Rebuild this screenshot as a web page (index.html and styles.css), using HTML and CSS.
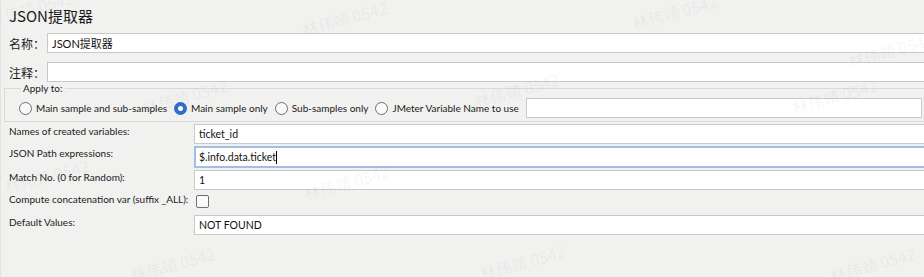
FILE: index.html
```html
<!DOCTYPE html>
<html lang="zh-CN">
<head>
    <meta charset="UTF-8">
    <meta name="viewport" content="width=device-width, initial-scale=1.0">
    <title>JSON提取器</title>
    <link rel="stylesheet" href="styles.css">
</head>
<body>
    <div class="panel">
        <h1 class="title">JSON提取器</h1>

        <div class="info-row">
            <label class="info-label" for="name">名称：</label>
            <input type="text" id="name" class="textbox" value="JSON提取器">
        </div>
        <div class="info-row">
            <label class="info-label" for="comment">注释：</label>
            <input type="text" id="comment" class="textbox">
        </div>

        <fieldset class="apply">
            <legend>Apply to:</legend>
            <label class="radio"><input type="radio" name="scope">Main sample and sub-samples</label>
            <label class="radio"><input type="radio" name="scope" checked>Main sample only</label>
            <label class="radio"><input type="radio" name="scope">Sub-samples only</label>
            <label class="radio"><input type="radio" name="scope">JMeter Variable Name to use</label>
            <input type="text" class="textbox var-name">
        </fieldset>

        <div class="props">
            <label class="prop-label">Names of created variables:</label>
            <input type="text" class="textbox" value="ticket_id">

            <label class="prop-label">JSON Path expressions:</label>
            <div class="textbox focused">$.info.data.ticket<span class="caret"></span></div>

            <label class="prop-label">Match No. (0 for Random):</label>
            <input type="text" class="textbox" value="1">

            <label class="prop-label">Compute concatenation var (suffix _ALL):</label>
            <div><input type="checkbox" class="check"></div>

            <label class="prop-label">Default Values:</label>
            <input type="text" class="textbox" value="NOT FOUND">
        </div>

        <!-- watermark -->
        <span class="mark" style="left:-14px;top:-4px">林伟靖 0542</span>
        <span class="mark" style="left:300px;top:6px">林伟靖 0542</span>
        <span class="mark" style="left:630px;top:0px">林伟靖 0542</span>
        <span class="mark" style="left:846px;top:38px">林伟靖 0542</span>
        <span class="mark" style="left:140px;top:84px">林伟靖 0542</span>
        <span class="mark" style="left:472px;top:78px">林伟靖 0542</span>
        <span class="mark" style="left:790px;top:84px">林伟靖 0542</span>
        <span class="mark" style="left:2px;top:164px">林伟靖 0542</span>
        <span class="mark" style="left:302px;top:170px">林伟靖 0542</span>
        <span class="mark" style="left:128px;top:252px">林伟靖 0542</span>
        <span class="mark" style="left:478px;top:250px">林伟靖 0542</span>
        <span class="mark" style="left:828px;top:252px">林伟靖 0542</span>
    </div>
</body>
</html>
```

FILE: styles.css
```css
body {
    margin: 0;
    background: #f1f1f0;
    font-family: Lato, "Noto Sans CJK SC", sans-serif;
    font-size: 10px;
    color: #1a1a1a;
    overflow: hidden;
}
.panel {
    position: relative;
    height: 277px;
    padding: 0 0 0 8px;
    border-left: 1px solid #e2e2e2;
    overflow: hidden;
}
.title {
    margin: 0;
    padding-top: 7px;
    height: 26px;
    font-size: 15px;
    font-weight: normal;
    font-family: "Noto Sans CJK SC", sans-serif;
    line-height: 18px;
}
.info-row {
    display: flex;
    align-items: center;
    height: 20px;
    margin-bottom: 9px;
}
.info-label {
    width: 38px;
    font-family: "Noto Sans CJK SC", sans-serif;
    font-size: 12px;
}
.textbox {
    box-sizing: border-box;
    height: 20px;
    width: calc(100% + 10px);
    margin: 0;
    padding: 0 4px;
    border: 1px solid #c9c9c9;
    background: #fff;
    font-family: Lato, "Noto Sans CJK SC", sans-serif;
    font-size: 10.5px;
    color: #111;
    outline: none;
}
.info-row .textbox {
    flex: 1;
    width: auto;
    margin-right: -10px;
    font-size: 11px;
}
.apply {
    display: flex;
    align-items: center;
    margin: -9px 0 0 -5px;
    padding: 4px 0 3px 14px;
    border: 1px solid #d9d9d9;
    border-right: none;
}
.apply legend {
    padding: 0 2px;
    margin-left: 2px;
    line-height: 12px;
}
.radio {
    display: flex;
    align-items: center;
    margin-right: 7px;
    white-space: nowrap;
}
.radio input {
    appearance: none;
    box-sizing: border-box;
    width: 13px;
    height: 13px;
    margin: 0 4px 0 0;
    border: 1px solid #6f6f6f;
    border-radius: 50%;
    background: #fafafa;
}
.radio input:checked {
    border: 4px solid #2d6ec9;
    background: #fff;
}
.var-name {
    flex: 1;
    width: auto;
    margin-right: 2px;
}
.props {
    display: grid;
    grid-template-columns: 185px 1fr;
    grid-template-rows: 20px 22px 20px 21px 20px;
    row-gap: 2px;
    margin-top: 2px;
}
.prop-label {
    line-height: 14px;
    white-space: nowrap;
}
.props .textbox {
    margin-right: -10px;
}
.focused {
    height: 22px;
    border: 2px solid #9fbfe6;
    display: flex;
    align-items: center;
    padding-left: 3px;
}
.caret {
    display: inline-block;
    width: 1px;
    height: 13px;
    background: #000;
}
.check {
    appearance: none;
    width: 13px;
    height: 13px;
    margin: 3px 0 0 2px;
    border: 1px solid #6f6f6f;
    border-radius: 2px;
    background: #fafafa;
}
.mark {
    position: absolute;
    transform: rotate(-15deg);
    font-family: "Noto Sans CJK SC", sans-serif;
    font-size: 16px;
    color: rgba(0, 0, 0, 0.055);
    white-space: nowrap;
    pointer-events: none;
}
```
